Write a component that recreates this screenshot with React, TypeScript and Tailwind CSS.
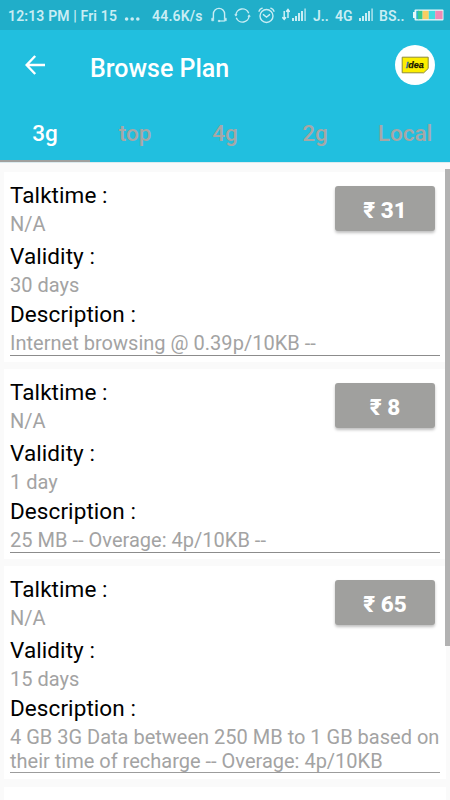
import React from "react";

const tabs = ["3g", "top", "4g", "2g", "Local"];

const plans = [
  {
    price: "31",
    talktime: "N/A",
    validity: "30 days",
    description: ["Internet browsing @ 0.39p/10KB --"],
  },
  {
    price: "8",
    talktime: "N/A",
    validity: "1 day",
    description: ["25 MB -- Overage: 4p/10KB --"],
  },
  {
    price: "65",
    talktime: "N/A",
    validity: "15 days",
    description: [
      "4 GB 3G Data between 250 MB to 1 GB based on",
      "their time of recharge -- Overage: 4p/10KB",
    ],
  },
];

function Signal({ className }: { className: string }) {
  return (
    <svg viewBox="0 0 15 14" className={className} fill="#c9edf4">
      <rect x="0" y="10" width="2" height="3" />
      <rect x="3" y="8" width="2" height="5" />
      <rect x="6" y="5" width="2" height="8" />
      <rect x="9" y="3" width="2" height="10" />
      <rect x="12.2" y="0.5" width="1.8" height="12.5" opacity="0.7" />
    </svg>
  );
}

function StatusBar() {
  return (
    <div className="flex h-[30px] items-center bg-[#20aec9] pl-2 text-[14px] font-semibold whitespace-nowrap text-[#c9edf4]">
      <span className="mt-[2px] w-[116px] tracking-[0.14px]">12:13 PM | Fri 15</span>
      {/* Notification dots */}
      <svg viewBox="0 0 16 4" className="mt-[8px] h-1 w-4 shrink-0" fill="#c9edf4">
        <circle cx="2.6" cy="2" r="1.8" />
        <circle cx="8.2" cy="2" r="1.8" />
        <circle cx="13.8" cy="2" r="1.8" />
      </svg>
      <span className="mt-[2px] ml-3 w-[58px] tracking-[0.2px]">44.6K/s</span>
      {/* Headset */}
      <svg viewBox="0 0 18 16" className="h-4 w-[18px] shrink-0" fill="none" stroke="#c9edf4" strokeWidth="1.4">
        <path d="M3.4 11.5V7a5.6 5.6 0 0 1 11.2 0v4.5" />
        <path d="M1.7 11.2h2v2.6h-2zM14.3 11.2h2v2.6h-2z" fill="#c9edf4" strokeWidth="0.6" />
        <path d="M14.8 14H9" strokeWidth="1.2" />
        <circle cx="9" cy="14" r="0.9" fill="#c9edf4" strokeWidth="0.5" />
      </svg>
      {/* Sync */}
      <svg viewBox="0 0 17 17" className="ml-[6px] h-[17px] w-[17px] shrink-0" fill="none" stroke="#c9edf4" strokeWidth="1.4">
        <path d="M1.9 8.4A6.6 6.6 0 0 1 14.7 6.2M15.1 8.6A6.6 6.6 0 0 1 2.3 10.8" />
        <path d="M.6 7.6h2.6L1.9 9.3zM16.4 9.4h-2.6l1.3-1.7z" fill="#c9edf4" strokeWidth="0.4" />
      </svg>
      {/* Alarm */}
      <svg viewBox="0 0 17 17" className="ml-[7px] h-[17px] w-[17px] shrink-0" fill="none" stroke="#c9edf4" strokeWidth="1.4" strokeLinecap="round">
        <circle cx="8.5" cy="9" r="6.5" />
        <path d="M1 4.2Q1.8 2 4.2 1.2M16 4.2Q15.2 2 12.8 1.2M5.4 7.6l3.1 2.6 3.1-2.6" />
      </svg>
      {/* Data arrows */}
      <svg viewBox="0 0 8 13" className="mb-[2px] ml-[7px] h-[13px] w-2 shrink-0" fill="none" stroke="#d8f3f8" strokeWidth="1.4">
        <path d="M2.2 3v8M.3 9.2l1.9 2.3L4 9.2M6 10V2M4.2 3.8L6 1.5l1.8 2.3" />
      </svg>
      <Signal className="ml-[2px] h-[14px] w-[15px] shrink-0" />
      <span className="mt-[2px] ml-[6px] w-[22px]">J..</span>
      <span className="mt-[2px] w-6">4G</span>
      <Signal className="h-[14px] w-[15px] shrink-0" />
      <span className="mt-[2px] ml-[5px] w-[34px]">BS..</span>
      {/* Battery */}
      <svg viewBox="0 0 31 12" className="h-3 w-[31px] shrink-0">
        <rect x="0" y="3" width="2" height="6" fill="#e6f7fa" />
        <rect x="1.5" y="0.5" width="29" height="11" rx="1" fill="#e6f7fa" />
        <rect x="3.3" y="1.8" width="2.7" height="8.4" fill="#27b4cd" />
        <rect x="5" y="1.8" width="4.6" height="8.4" fill="#37c98f" />
        <rect x="9.6" y="1.8" width="6.2" height="8.4" fill="#f8ce62" />
        <rect x="15.8" y="1.8" width="6.4" height="8.4" fill="#42dbe0" />
        <rect x="22.2" y="1.8" width="7.4" height="8.4" fill="#f08bb4" />
      </svg>
    </div>
  );
}

function Toolbar() {
  return (
    <div className="flex h-[75px] items-center pr-[15px] pl-[25px]">
      <svg viewBox="0 0 20 20" className="mt-[-5px] h-5 w-5 shrink-0" fill="none" stroke="#fff" strokeWidth="2.4">
        <path d="M20 10H2M10.2 1L1.6 10l8.6 9" />
      </svg>
      <h1 className="mt-[2px] ml-[45px] flex-1 text-[25px] font-medium text-white">Browse Plan</h1>
      {/* Operator logo */}
      <div className="mt-[-5px] flex h-10 w-10 items-center justify-center rounded-full bg-white">
        <svg viewBox="0 0 28 18" className="h-[18px] w-7">
          <path d="M1.2 1.2h26v11.3L22.7 16.8H1.2z" fill="#fcee00" stroke="#8f8c35" strokeWidth="1" />
          <text x="4.6" y="11.9" fontSize="9.5" fontWeight="700" fontStyle="italic" fontFamily="Liberation Sans, sans-serif" fill="#2b6ca6" stroke="#2b6ca6" strokeWidth="0.3">!</text>
          <text x="7.3" y="11.9" fontSize="9" fontWeight="700" fontStyle="italic" fontFamily="Liberation Sans, sans-serif" fill="#151500" stroke="#151500" strokeWidth="0.25" textLength="15.4">dea</text>
        </svg>
      </div>
    </div>
  );
}

function Tabs() {
  return (
    <div className="grid h-[57px] grid-cols-5 text-[22.5px] font-medium">
      {tabs.map((tab, i) => (
        <div
          key={tab}
          className={
            i === 0
              ? "flex items-center justify-center border-b-2 border-[#a0a09e] pt-[2px] text-white"
              : "flex items-center justify-center border-b-2 border-transparent pt-[2px] text-[#a7a7a6]"
          }
        >
          {tab}
        </div>
      ))}
    </div>
  );
}

function PlanCard({ plan }: { plan: (typeof plans)[number] }) {
  return (
    <div className="relative mx-1 bg-white px-[6px] pt-[10px] pb-[6px] text-[20px] leading-[24px] text-[#a3a3a3]">
      <p className="mb-1 text-[22.5px] leading-[26px] tracking-[0.08px] text-black">Talktime :</p>
      <p className="mb-[7px]">{plan.talktime}</p>
      <p className="mb-1 text-[22.5px] leading-[26px] tracking-[0.08px] text-black">Validity :</p>
      <p className="mb-1">{plan.validity}</p>
      <p className="mb-1 text-[22.5px] leading-[26px] tracking-[0.08px] text-black">Description :</p>
      <div className={plan.description.length > 1 ? "h-12 border-b border-[#9c9c9c]" : "border-b border-[#8c8c8c] tracking-[0.02px]"}>
        {plan.description.map((line) => (
          <p key={line} className="whitespace-nowrap">{line}</p>
        ))}
      </div>
      <button className="absolute top-[14px] right-[11px] h-[45px] w-[100px] rounded-[3px] bg-[#a0a09e] pt-[2px] text-[22.5px] font-extrabold text-white shadow-[0_2px_3px_rgba(0,0,0,0.25)]">
        ₹ {plan.price}
      </button>
    </div>
  );
}

export default function App() {
  return (
    <div className="relative h-[800px] w-[450px] overflow-hidden bg-[#fafafa] font-['Roboto',sans-serif]">
      <StatusBar />
      <div className="bg-[#21bfdf]">
        <Toolbar />
        <Tabs />
      </div>
      <div className="h-px bg-[#dcebef]" />
      <div className="flex flex-col gap-[7px] pt-[9px]">
        {plans.map((plan) => (
          <PlanCard key={plan.price} plan={plan} />
        ))}
        <div className="mx-1 mt-px h-10 bg-white" />
      </div>
      {/* Scrollbar */}
      <div className="absolute top-[169px] right-0 h-[477px] w-[5px] bg-[#b2b2b2]" />
    </div>
  );
}
